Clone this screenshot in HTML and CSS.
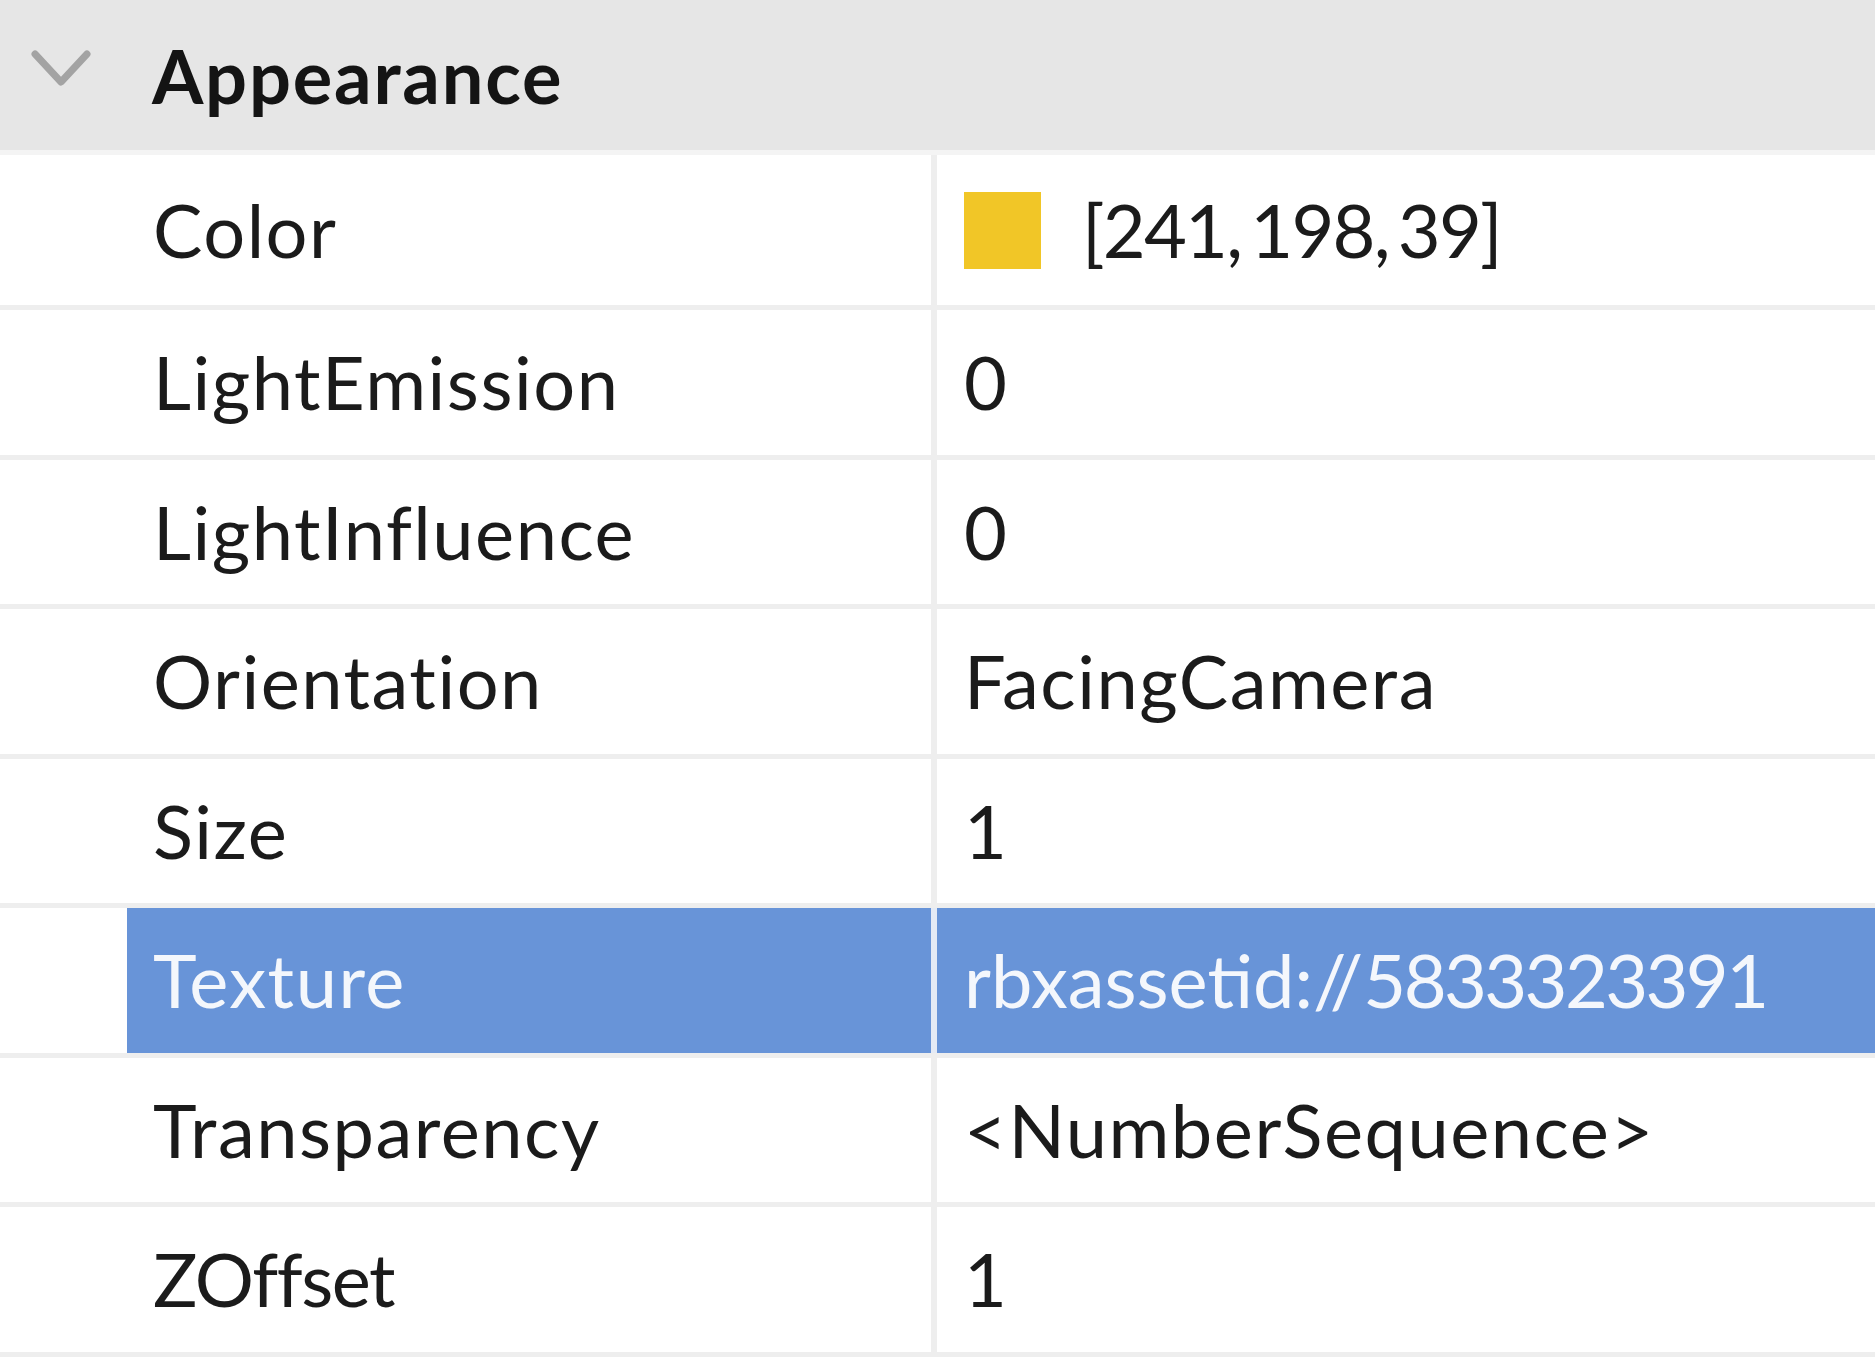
FILE: index.html
```html
<!DOCTYPE html>
<html lang="en">
<head>
<meta charset="utf-8">
<title>Properties - Appearance</title>
<link rel="stylesheet" href="styles.css">
</head>
<body>
<div class="panel">
  <div class="group-header">
    <svg class="chevron" width="60" height="40" viewBox="0 0 60 40" aria-hidden="true">
      <polyline points="4,4 30,32 56,4" fill="none" stroke="#a3a3a3" stroke-width="7" stroke-linecap="round" stroke-linejoin="round"/>
    </svg>
    <span class="group-title">Appearance</span>
  </div>
  <div class="rows">
    <div class="row row-first">
      <div class="indent"></div>
      <div class="name">Color</div>
      <div class="value"><span class="swatch"></span><span class="num color-text">[241, 198, 39]</span></div>
    </div>
    <div class="row">
      <div class="indent"></div>
      <div class="name">LightEmission</div>
      <div class="value">0</div>
    </div>
    <div class="row">
      <div class="indent"></div>
      <div class="name">LightInfluence</div>
      <div class="value">0</div>
    </div>
    <div class="row">
      <div class="indent"></div>
      <div class="name">Orientation</div>
      <div class="value">FacingCamera</div>
    </div>
    <div class="row">
      <div class="indent"></div>
      <div class="name">Size</div>
      <div class="value">1</div>
    </div>
    <div class="row selected">
      <div class="indent"></div>
      <div class="name">Texture</div>
      <div class="value"><span class="prefix">rbxassetid://</span><span class="num">5833323391</span></div>
    </div>
    <div class="row">
      <div class="indent"></div>
      <div class="name">Transparency</div>
      <div class="value">&lt;NumberSequence&gt;</div>
    </div>
    <div class="row">
      <div class="indent"></div>
      <div class="name"><span class="tight">ZOffset</span></div>
      <div class="value">1</div>
    </div>
  </div>
</div>
</body>
</html>
```
FILE: styles.css
```css
html, body {
  margin: 0;
  padding: 0;
  background: #ffffff;
}

body {
  font-family: "Lato", "Open Sans", sans-serif;
  color: #1b1b1b;
  overflow: hidden;
}

.panel {
  width: 1875px;
}

.group-header {
  height: 155px;
  box-sizing: border-box;
  background: #e6e6e6;
  display: flex;
  align-items: center;
  border-bottom: 5px solid #f4f4f4;
}

.chevron {
  margin-left: 31px;
  margin-top: -10px;
  flex: none;
}

.group-title {
  margin-left: 61px;
  font-weight: 700;
  font-size: 74px;
  letter-spacing: 1.8px;
  color: #141414;
  line-height: 1;
  margin-top: 2px;
}

.row {
  display: grid;
  grid-template-columns: 127px 804px 1fr;
  height: 149.5px;
  box-sizing: border-box;
  border-bottom: 5px solid #eeeeee;
  font-size: 74px;
  letter-spacing: 1.5px;
  line-height: 1;
}

.row-first {
  height: 155px;
}

.indent {
  background: #ffffff;
}

.name {
  display: flex;
  align-items: center;
  padding-left: 26px;
  white-space: nowrap;
}

.value {
  display: flex;
  align-items: center;
  padding-left: 27px;
  border-left: 6px solid #eeeeee;
  white-space: nowrap;
}

.swatch {
  width: 77px;
  height: 77px;
  background: rgb(241, 198, 39);
  margin-right: 41px;
  flex: none;
}

.num {
  letter-spacing: -2.6px;
}

.color-text {
  letter-spacing: -1.8px;
  word-spacing: -8px;
}

.prefix {
  letter-spacing: 0;
}

.tight {
  letter-spacing: -1.5px;
}

.selected .name,
.selected .value {
  background: #6894d8;
  color: #f4f7fc;
}

.selected .value {
  border-left-color: #e4eaf5;
}
```
